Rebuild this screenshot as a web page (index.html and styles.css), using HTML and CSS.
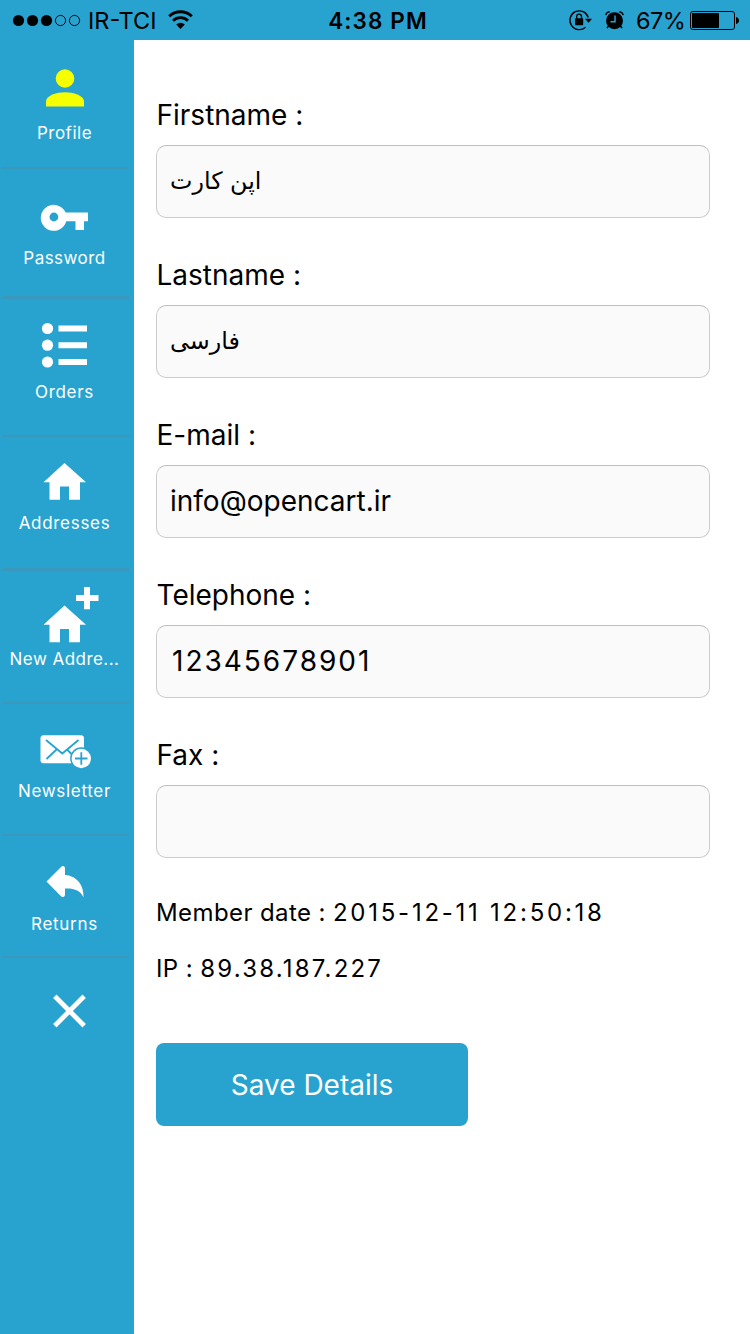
FILE: index.html
```html
<!DOCTYPE html>
<html lang="en">
<head>
<meta charset="utf-8">
<title>Profile</title>
<link rel="stylesheet" href="styles.css">
</head>
<body>
<header class="status">
  <div class="status-left">
    <svg class="dots" width="69" height="40" viewBox="12 0 69 40"><circle cx="18.500" cy="20.500" r="5.600"/><circle cx="32.500" cy="20.500" r="5.600"/><circle cx="46.500" cy="20.500" r="5.600"/><g fill="none" stroke="#000"><circle cx="60.500" cy="20.500" r="5.100"/><circle cx="74.500" cy="20.500" r="5.100"/></g></svg>
    <span class="carrier">IR-TCI</span>
    <svg class="wifi" width="26" height="40" viewBox="168 0 26 40"><g fill="none" stroke="#000" stroke-width="2.900"><path d="M169.200 16.300a16.200 16.200 0 0 1 22.600 0"/><path d="M173 20.700a10.800 10.800 0 0 1 15 0"/></g><path d="M176.200 24.500a6.200 6.200 0 0 1 8.600 0L180.500 29Z"/></svg>
  </div>
  <span class="clock">4:38 PM</span>
  <div class="status-right">
    <svg width="58" height="40" viewBox="568 0 58 40">
      <path d="M588.300 17.500A9.400 9.400 0 1 0 585.500 27.300" fill="none" stroke="#000" stroke-width="1.300"/>
      <path d="M585 18.800h7l-3.500 4z"/><rect x="575" y="18.300" width="8.200" height="7" rx=".7"/><path d="M576.700 19v-2.500a2.400 2.400 0 0 1 4.800 0v2.500" fill="none" stroke="#000" stroke-width="1.300"/>
      <circle cx="614.500" cy="20.800" r="8.500"/><path d="M605.800 15.200q.5-3.200 4-3.500M623.200 15.200q-.5-3.200-4-3.500" fill="none" stroke="#000" stroke-width="1.400"/><path d="M608.500 26l-1.500 2.200M620.500 26l1.500 2.200" stroke="#000" stroke-width="1.500"/><path d="M615 15.500v6.200h-4.500" fill="none" stroke="#28a3d0" stroke-width="1.500"/>
    </svg>
    <span class="percent">67%</span>
    <svg class="battery" width="50" height="40" viewBox="690 0 50 40"><rect x="690.500" y="11.500" width="44" height="18" rx="2.500" fill="none" stroke="#000"/><rect x="692" y="13" width="27" height="15" rx="1"/><path d="M736 17q3 1 3 3.500t-3 3.500z"/></svg>
  </div>
</header>
<div class="layout">
  <nav class="sidebar">
    <a class="item profile"><svg width="127" height="83" viewBox="2 40 127 83"><circle cx="65" cy="78.500" r="9.300"/><path d="M46 106.500V101.500C46 95.500 57 92.300 65 92.300S84 95.500 84 101.500V106.500Z"/></svg><span>Profile</span></a>
    <a class="item password"><svg width="127" height="79" viewBox="2 169 127 79"><path fill-rule="evenodd" d="M65.600 212.500H88V221.300H84V230H75.500V221.300H66.300A13 13 0 1 1 65.600 212.500ZM58.300 217a4.400 4.400 0 1 0-8.800 0a4.400 4.400 0 0 0 8.800 0Z"/></svg><span>Password</span></a>
    <a class="item orders"><svg width="127" height="83" viewBox="2 299 127 83"><circle cx="47.500" cy="328.500" r="5.600"/><circle cx="47.500" cy="345.200" r="5.600"/><circle cx="47.500" cy="362" r="5.600"/><path d="M58.500 325.500H87V331.500H58.500ZM58.500 342.200H87V348.200H58.500ZM58.500 359H87V365H58.500Z"/></svg><span>Orders</span></a>
    <a class="item addresses"><svg width="127" height="76" viewBox="2 437 127 76"><path d="M64.500 463L86 482.300H80V499.700H69V486.500H60V499.700H49.500V482.300H43.500Z"/></svg><span>Addresses</span></a>
    <a class="item new-address"><svg width="127" height="78" viewBox="2 571 127 78"><path d="M64.500 605.500L86 624.800H80V642.200H69V629H60V642.200H49.500V624.800H43.500ZM84 587H90V595H98.500V601H90V609.300H84V601H76V595H84Z"/></svg><span>New Addre...</span></a>
    <a class="item newsletter"><svg width="127" height="76" viewBox="2 704 127 76"><rect x="40.500" y="735.300" width="43.500" height="28" rx="3"/><path class="cut" d="M46 740L62.300 753.500L78.500 740M46.500 759L56.500 749.500M67 749.500L72.500 755"/><circle class="cut" cx="81.300" cy="758.500" r="10.300"/><circle cx="81.300" cy="758.500" r="9.700"/><path class="cut" d="M75 758.500H87.500M81.300 752.300V764.800"/></svg><span>Newsletter</span></a>
    <a class="item returns"><svg width="127" height="78" viewBox="2 836 127 78"><path d="M46.500 881.500L61 867Q62.500 865.700 64 866.300Q65 867 65 868.500V875C76 875.500 84 884.500 83.500 897.300C80.500 890.500 74 888 65 888.500V894.500Q65 896.300 63.800 896.700Q62 897.300 61 896.200Z"/></svg><span>Returns</span></a>
    <a class="item close"><svg width="127" height="82" viewBox="2 958 127 82"><path d="M54.800 996.300L84.200 1025.700M84.200 996.300L54.800 1025.700" stroke="#fff" stroke-width="4.800"/></svg></a>
  </nav>
  <main class="form">
    <label class="field"><span>Firstname :</span><span class="input fa" dir="rtl">اپن کارت</span></label>
    <label class="field"><span>Lastname :</span><span class="input fa" dir="rtl">فارسی</span></label>
    <label class="field"><span>E-mail :</span><span class="input">info@opencart.ir</span></label>
    <label class="field"><span>Telephone :</span><span class="input phone">12345678901</span></label>
    <label class="field"><span>Fax :</span><span class="input"></span></label>
    <p class="meta">Member date : <span class="date">2015-12-11 12:50:18</span></p>
    <p class="meta">IP : <span class="address">89.38.187.227</span></p>
    <button class="save">Save Details</button>
  </main>
</div>
</body>
</html>
```
FILE: styles.css
```css
* { box-sizing: border-box; }
body { margin: 0; width: 750px; height: 1334px; background: #fff; color: #000; font-family: Inter, "Liberation Sans", sans-serif; overflow: hidden; }
svg { display: block; flex: none; }
.status { height: 40px; background: #28a3d0; display: grid; grid-template-columns: 1fr auto 1fr; align-items: center; padding: 0 10px 0 12px; font-size: 23.5px; white-space: nowrap; }
.status-left, .status-right { display: flex; align-items: center; }
.status-right { justify-content: flex-end; }
.carrier { width: 80px; margin-left: 7px; padding-top: 1px; letter-spacing: 0; }
.clock { font-weight: 600; font-size: 22.5px; letter-spacing: 1.1px; padding-left: 4px; }
.percent { width: 53px; margin: 0 1px 0 10px; padding-top: 1px; letter-spacing: -0.6px; }
.layout { display: flex; height: 1294px; }
.sidebar { width: 134px; background: #28a3d0; padding-left: 2px; display: flex; flex-direction: column; }
.item { width: 127px; border-bottom: 2px solid #3c97bc; color: #fff; font-size: 17px; line-height: 20px; letter-spacing: 0.7px; text-align: center; white-space: nowrap; flex: none; }
.item svg { fill: #fff; }
.item span { display: block; padding-right: 2px; }
.item .cut { fill: none; stroke: #28a3d0; stroke-width: 1.8; }
.profile { height: 129px; }
.profile svg { fill: #f5ff00; }
.profile span { letter-spacing: 0.5px; }
.password { height: 130px; border-bottom-width: 3px; }
.password span { letter-spacing: 0.45px; }
.orders { height: 138px; }
.addresses { height: 134px; border-bottom-width: 3px; }
.new-address { height: 133px; }
.new-address span { letter-spacing: 0.45px; }
.newsletter { height: 132px; }
.newsletter span { padding-top: 1px; }
.returns { height: 122px; }
.close { border: 0; }
.form { flex: 1; padding: 55px 40px 0 22px; }
.field { display: block; height: 160px; font-size: 28px; line-height: 41px; }
.field > span:first-child { display: block; height: 50px; padding-left: 0.5px; }
.input { display: flex; align-items: center; height: 73px; border: 1px solid #ccc; border-top-color: #bfbfbf; border-radius: 10px; background: #fafafa; padding: 0 13px; }
.fa { justify-content: flex-end; font-family: "DejaVu Sans", sans-serif; font-size: 23.8px; }
.phone { padding-left: 15px; letter-spacing: 2px; }
.meta { margin: 0; height: 56px; font-size: 24px; line-height: 36px; letter-spacing: 0.4px; white-space: nowrap; }
.date { letter-spacing: 2.75px; }
.address { letter-spacing: 2.2px; }
.save { display: block; width: 312px; height: 83px; margin-top: 36px; padding: 0; border: 0; border-radius: 8px; background: #28a3d0; color: #fff; font: 28px Inter, sans-serif; }
```
